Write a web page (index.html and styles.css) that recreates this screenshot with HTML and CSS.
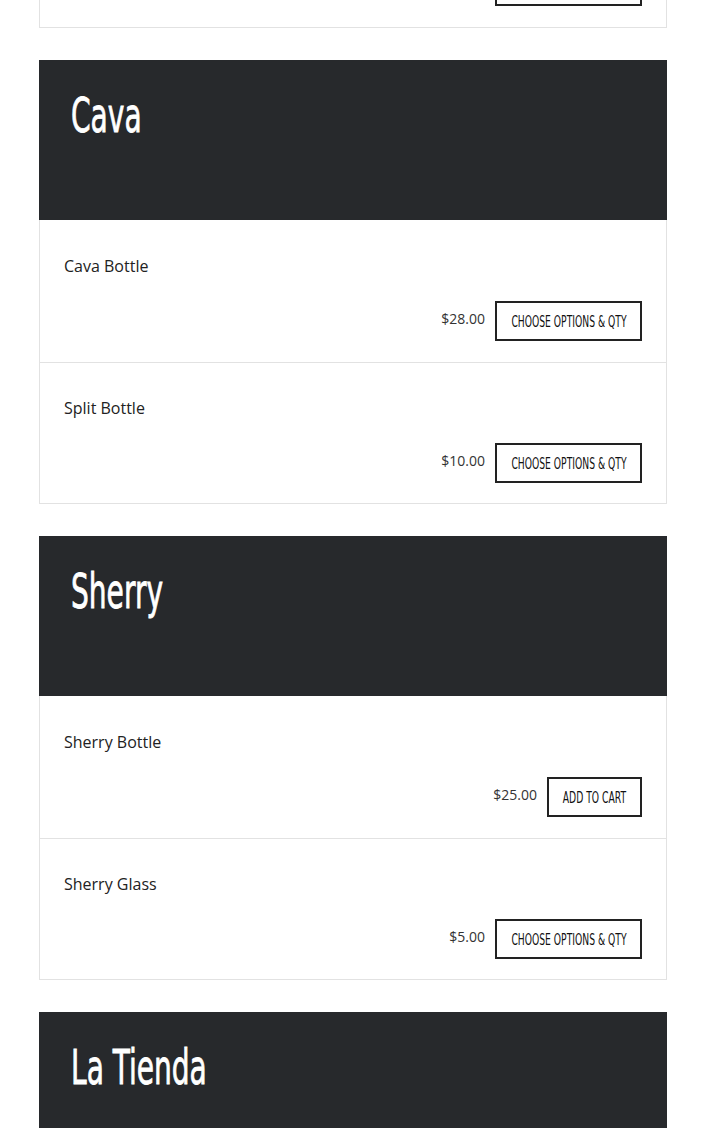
FILE: index.html
```html
<!DOCTYPE html>
<html lang="en">
<head>
<meta charset="utf-8">
<title>Menu</title>
<link rel="stylesheet" href="styles.css">
</head>
<body>
<main class="menu">
  <section class="category category--cut">
    <ul class="items">
      <li class="item">
        <p class="item-name">Cava Glass</p>
        <div class="item-buy">
          <span class="price">$8.00</span>
          <button class="btn btn--options"><span class="btn-label">CHOOSE OPTIONS &amp; QTY</span></button>
        </div>
      </li>
    </ul>
  </section>

  <section class="category">
    <header class="cat-head"><h2 class="cat-title">Cava</h2></header>
    <ul class="items">
      <li class="item">
        <p class="item-name">Cava Bottle</p>
        <div class="item-buy">
          <span class="price">$28.00</span>
          <button class="btn btn--options"><span class="btn-label">CHOOSE OPTIONS &amp; QTY</span></button>
        </div>
      </li>
      <li class="item">
        <p class="item-name">Split Bottle</p>
        <div class="item-buy">
          <span class="price">$10.00</span>
          <button class="btn btn--options"><span class="btn-label">CHOOSE OPTIONS &amp; QTY</span></button>
        </div>
      </li>
    </ul>
  </section>

  <section class="category">
    <header class="cat-head"><h2 class="cat-title">Sherry</h2></header>
    <ul class="items">
      <li class="item">
        <p class="item-name">Sherry Bottle</p>
        <div class="item-buy">
          <span class="price">$25.00</span>
          <button class="btn btn--cart"><span class="btn-label">ADD TO CART</span></button>
        </div>
      </li>
      <li class="item">
        <p class="item-name">Sherry Glass</p>
        <div class="item-buy">
          <span class="price">$5.00</span>
          <button class="btn btn--options"><span class="btn-label">CHOOSE OPTIONS &amp; QTY</span></button>
        </div>
      </li>
    </ul>
  </section>

  <section class="category">
    <header class="cat-head"><h2 class="cat-title">La Tienda</h2></header>
  </section>
</main>
</body>
</html>
```

FILE: styles.css
```css
* { box-sizing: border-box; }

html, body {
  margin: 0;
  padding: 0;
  background: #ffffff;
}

body {
  font-family: "Open Sans", "Liberation Sans", sans-serif;
  color: #222;
  overflow: hidden;
}

.menu {
  width: 628px;
  margin: 0 0 0 39px;
  display: flex;
  flex-direction: column;
  gap: 32px;
}

.category--cut {
  margin-top: -115px;
}

.cat-head {
  background: #27292c;
  height: 160px;
  padding: 27px 32px 0;
}

.cat-title {
  margin: 0;
  color: #fff;
  font-family: "Liberation Sans Narrow", "DejaVu Sans Condensed", "Liberation Sans", sans-serif;
  font-weight: normal;
  font-size: 48px;
  line-height: 56px;
  display: inline-block;
  white-space: nowrap;
  transform: scaleX(0.65);
  transform-origin: left center;
  -webkit-text-stroke: 0.8px #fff;
}

.items {
  list-style: none;
  margin: 0;
  padding: 0;
  border: 1px solid #e2e2e2;
  border-top: 0;
}

.item {
  padding: 34px 24px 21px;
  height: 142px;
}

.item + .item {
  border-top: 1px solid #e2e2e2;
  height: 141px;
  padding-top: 33px;
}

.item-name {
  margin: 0;
  font-size: 16px;
  line-height: 24px;
  color: #222;
}

.item-buy {
  margin-top: 23px;
  display: flex;
  justify-content: flex-end;
  align-items: center;
  gap: 10px;
}

.price {
  font-size: 14px;
  line-height: 20px;
  color: #333;
  margin-top: -4px;
}

.btn {
  height: 40px;
  border: 2px solid #222;
  background: #fff;
  padding: 0;
  display: flex;
  align-items: center;
  justify-content: center;
  font-family: "Liberation Sans Narrow", "DejaVu Sans Condensed", "Liberation Sans", sans-serif;
  font-size: 16px;
  color: #111;
  cursor: pointer;
}

.btn--options { width: 147px; }
.btn--cart { width: 95px; }

.btn-label {
  display: inline-block;
  white-space: nowrap;
  transform: scaleX(0.64);
}
```
